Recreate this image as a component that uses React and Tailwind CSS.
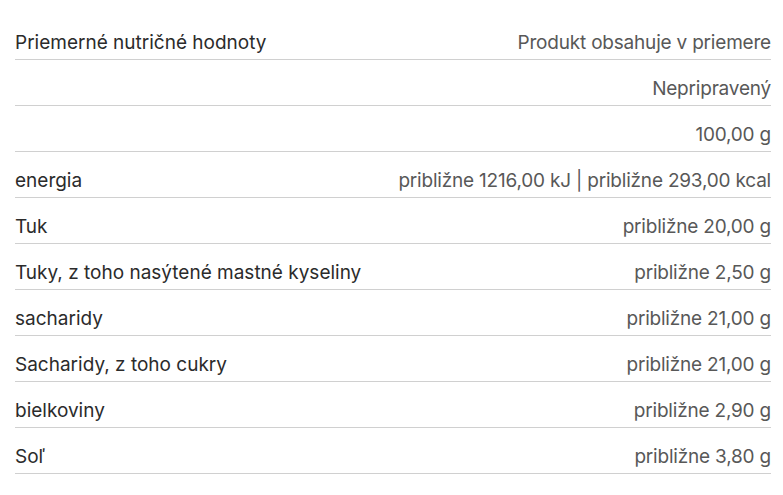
import React from 'react';

const rows = [
    ['Priemerné nutričné hodnoty', 'Produkt obsahuje v priemere'],
    ['', 'Nepripravený'],
    ['', '100,00 g'],
    ['energia', 'približne 1216,00 kJ | približne 293,00 kcal'],
    ['Tuk', 'približne 20,00 g'],
    ['Tuky, z toho nasýtené mastné kyseliny', 'približne 2,50 g'],
    ['sacharidy', 'približne 21,00 g'],
    ['Sacharidy, z toho cukry', 'približne 21,00 g'],
    ['bielkoviny', 'približne 2,90 g'],
    ['Soľ', 'približne 3,80 g'],
];

const App = () => {
    return (
        <div className="bg-white min-h-screen pt-[14px] pl-[15px]" style={{ fontFamily: 'Inter, "Noto Sans", sans-serif' }}>
            <div className="w-[756px]">
                {rows.map(([label, value], i) => (
                    <div key={i} className="flex justify-between items-end h-[46px] pb-[4px] border-b border-[#d0d0d0] text-[19px] leading-[25px]">
                        <span className="text-[#2b2b2b]">{label}</span>
                        <span className="text-[#585858] tracking-[-0.2px]">{value}</span>
                    </div>
                ))}
            </div>
        </div>
    );
};

export default App;
